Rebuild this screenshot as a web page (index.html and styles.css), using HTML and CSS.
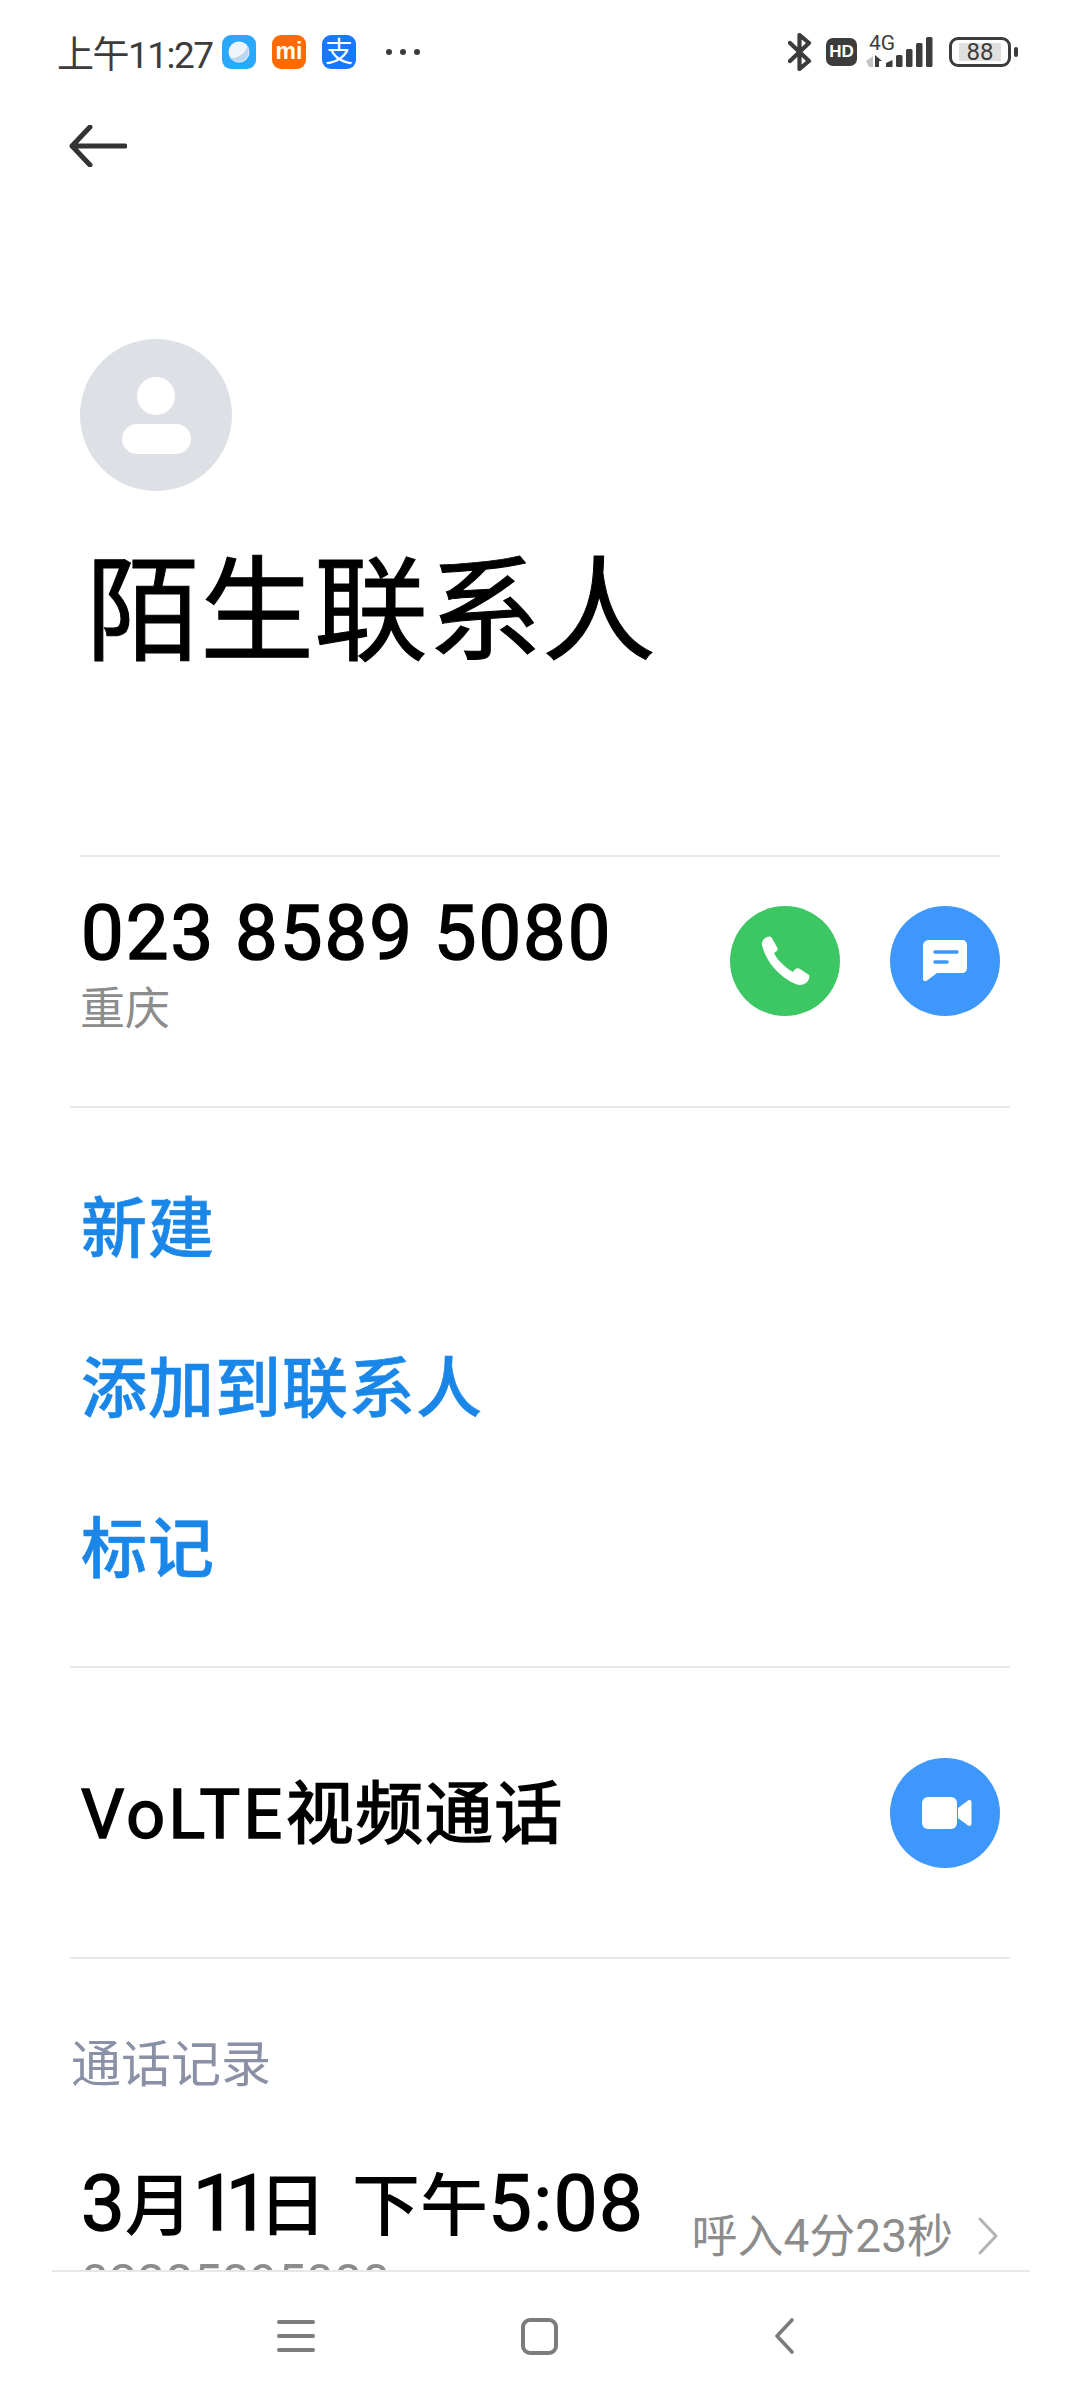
FILE: index.html
```html
<!DOCTYPE html>
<html lang="zh-CN">
<head>
    <meta charset="UTF-8">
    <meta name="viewport" content="width=device-width, initial-scale=1.0">
    <title>陌生联系人</title>
    <link rel="stylesheet" href="styles.css">
</head>
<body>
    <div class="phone">
        <div class="scroll-area">
            <div class="status-bar">
                <span class="time">上午11:27</span>
                <div class="notify-icons">
                    <svg class="app-icon" viewBox="0 0 34 34">
                        <rect width="34" height="34" rx="9" fill="#2aa8fb"/>
                        <circle cx="17" cy="17" r="10.500" fill="#eef4fa"/>
                        <path d="M8 23c6 1 14-3 18-12c2 6 0 12-5 15c-5 2-10 0-13-3z" fill="#bcd8f0"/>
                    </svg>
                    <svg class="app-icon" viewBox="0 0 34 34">
                        <rect width="34" height="34" rx="9" fill="#ff6a00"/>
                        <text x="17" y="24" class="mi-text">mi</text>
                    </svg>
                    <svg class="app-icon" viewBox="0 0 34 34">
                        <rect width="34" height="34" rx="9" fill="#1677ff"/>
                        <text x="17" y="27" class="pay-text">支</text>
                    </svg>
                    <div class="dots"><i></i><i></i><i></i></div>
                </div>
                <div class="system-icons">
                    <svg class="bt" viewBox="0 0 24 38">
                        <path d="M2 10l19 18l-9.500 8v-34l9.500 8l-19 18" fill="none" stroke="#3c3c3c" stroke-width="4.200" stroke-linejoin="round" stroke-linecap="round"/>
                    </svg>
                    <span class="hd">HD</span>
                    <svg class="signal" viewBox="0 0 68 34">
                        <text x="3" y="15" class="net-text">4G</text>
                        <path d="M7 21v11H3l-3-6z" fill="#c4c4c4"/>
                        <path d="M9 20l7 6h-3v6H9z" fill="#3c3c3c"/>
                        <path d="M20 28l6.500-3v7H20z" fill="#3c3c3c"/>
                        <rect x="30" y="20" width="6.500" height="12" rx="1.500" fill="#3c3c3c"/>
                        <rect x="40" y="14" width="6.500" height="18" rx="1.500" fill="#3c3c3c"/>
                        <rect x="50" y="8" width="6.500" height="24" rx="1.500" fill="#3c3c3c"/>
                        <rect x="60" y="2" width="6.500" height="30" rx="1.500" fill="#3c3c3c"/>
                    </svg>
                    <div class="battery">
                        <div class="battery-body"><span class="battery-level">88</span></div>
                        <div class="battery-tip"></div>
                    </div>
                </div>
            </div>

            <div class="toolbar">
                <svg class="back-arrow" viewBox="0 0 58 42">
                    <path d="M56 21H3M21 2L3 21l18 19" fill="none" stroke="#333" stroke-width="5" stroke-linecap="round" stroke-linejoin="round"/>
                </svg>
            </div>

            <div class="header">
                <div class="avatar">
                    <div class="avatar-head"></div>
                    <div class="avatar-body"></div>
                </div>
                <h1 class="name">陌生联系人</h1>
            </div>

            <div class="number-row">
                <div>
                    <div class="number">023 8589 5080</div>
                    <div class="location">重庆</div>
                </div>
                <div class="actions">
                    <div class="round-btn green">
                        <svg class="phone-icon" viewBox="0 0 50 50">
                            <path d="M2 9C1 5 5 1 9 .5C11 .5 12 2 13 4l4.500 8C18 14 17 15 14 17C16 22 24 31 33 36C35 33 37 31 40 33l9 6C50 41 49 44 46 47C43 49 40 49.500 37 48.500C22 43 6 27 2 9z" fill="#fff"/>
                        </svg>
                    </div>
                    <div class="round-btn blue">
                        <svg class="msg-icon" viewBox="0 0 45 43">
                            <path d="M6 1h33c3 0 5 2 5 5v23c0 3-2 5-5 5H14L4 41.500C2 43 0 42 0 40V7C0 3 3 1 6 1z" fill="#fff"/>
                            <path d="M12 13h22M12 23h12" stroke="#3e98fc" stroke-width="3.600" stroke-linecap="round"/>
                        </svg>
                    </div>
                </div>
            </div>

            <div class="link-list">
                <div class="link-item">新建</div>
                <div class="link-item">添加到联系人</div>
                <div class="link-item">标记</div>
            </div>

            <div class="volte-row">
                <div class="volte-text"><span class="latin">VoLTE</span>视频通话</div>
                <div class="round-btn blue">
                    <svg class="cam-icon" viewBox="0 0 50 32">
                        <rect x="0" y="0" width="35" height="32" rx="6" fill="#fff"/>
                        <path d="M36 11l10-7.500c2-1 3.500 0 3.500 2v21c0 2-1.500 3-3.500 2L36 21z" fill="#fff"/>
                    </svg>
                </div>
            </div>

            <div class="history">
                <div class="history-title">通话记录</div>
                <div class="call-row">
                    <div class="call-info">
                        <div class="call-time"><span class="num">3</span>月<span class="num tight">11</span>日<span class="num wide">&nbsp;</span>下午<span class="num loose">5:08</span></div>
                        <div class="call-number">02385895080</div>
                    </div>
                    <div class="call-meta">
                        <span>呼入4分23秒</span>
                        <svg class="chevron" viewBox="0 0 22 38">
                            <path d="M3 2l16 17L3 36" fill="none" stroke="#b4b4b4" stroke-width="3" stroke-linecap="round" stroke-linejoin="round"/>
                        </svg>
                    </div>
                </div>
            </div>
        </div>

        <div class="nav-bar">
            <div class="menu-icon"><i></i><i></i><i></i></div>
            <div class="home-icon"></div>
            <svg class="nav-back" viewBox="0 0 20 36">
                <path d="M18 2L3 18l15 16" fill="none" stroke="#7c7c7c" stroke-width="3.600" stroke-linecap="round" stroke-linejoin="round"/>
            </svg>
        </div>
    </div>
</body>
</html>
```

FILE: styles.css
```css
* {
    box-sizing: border-box;
}
body {
    margin: 0;
    background-color: #fff;
    font-family: Roboto, "Noto Sans CJK SC", sans-serif;
    color: #000;
}
.phone {
    width: 1080px;
    height: 2400px;
    display: flex;
    flex-direction: column;
    overflow: hidden;
}
.scroll-area {
    height: 2270px;
    overflow: hidden;
}

/* status bar */
.status-bar {
    height: 104px;
    padding: 0 62px 0 57px;
    display: flex;
    align-items: center;
    color: #3c3c3c;
}
.time {
    font-size: 37px;
    width: 165px;
    letter-spacing: -1.500px;
    white-space: nowrap;
}
.notify-icons {
    display: flex;
    align-items: center;
    gap: 16px;
}
.app-icon {
    width: 34px;
    height: 34px;
}
.mi-text {
    font-family: "Liberation Sans", sans-serif;
    font-size: 23px;
    font-weight: 700;
    fill: #fff;
    text-anchor: middle;
}
.pay-text {
    font-family: "Noto Sans CJK SC", sans-serif;
    font-size: 28px;
    fill: #fff;
    text-anchor: middle;
}
.dots {
    display: flex;
    gap: 8px;
    margin-left: 14px;
}
.dots i {
    width: 6px;
    height: 6px;
    border-radius: 50%;
    background-color: #3c3c3c;
}
.system-icons {
    margin-left: auto;
    display: flex;
    align-items: center;
}
.bt {
    width: 24px;
    height: 38px;
}
.hd {
    width: 31px;
    height: 28px;
    margin-left: 14px;
    border-radius: 7px;
    background-color: #3c3c3c;
    color: #fff;
    font-family: "Liberation Sans", sans-serif;
    font-size: 17px;
    font-weight: 700;
    line-height: 28px;
    text-align: center;
}
.signal {
    width: 68px;
    height: 34px;
    margin-left: 9px;
    overflow: visible;
}
.net-text {
    font-family: Roboto, sans-serif;
    font-size: 21px;
    fill: #3c3c3c;
}
.battery {
    display: flex;
    align-items: center;
    margin-left: 15px;
}
.battery-body {
    width: 62px;
    height: 30px;
    padding: 3px 7px;
    border: 3px solid #3c3c3c;
    border-radius: 9px;
}
.battery-level {
    display: block;
    width: 42px;
    height: 18px;
    background-color: #e0e0e0;
    font-size: 24px;
    line-height: 18px;
    text-align: center;
}
.battery-tip {
    width: 4px;
    height: 10px;
    margin-left: 3px;
    border-radius: 2px;
    background-color: #3c3c3c;
}

/* top */
.toolbar {
    height: 84px;
    padding-left: 69px;
    display: flex;
    align-items: center;
}
.back-arrow {
    width: 58px;
    height: 42px;
}
.header {
    padding: 151px 80px 0;
    height: 667px;
}
.avatar {
    width: 152px;
    height: 152px;
    border-radius: 50%;
    background-color: #dde0e5;
    display: flex;
    flex-direction: column;
    align-items: center;
    padding-top: 38px;
    gap: 9px;
}
.avatar-head {
    width: 38px;
    height: 38px;
    border-radius: 50%;
    background-color: #fff;
}
.avatar-body {
    width: 69px;
    height: 30px;
    border-radius: 15px;
    background-color: #fff;
}
.name {
    margin: 56px 0 0 6px;
    font-size: 114px;
    font-weight: 400;
    line-height: 130px;
    -webkit-text-stroke: 1px #000;
    white-space: nowrap;
}

/* number */
.number-row {
    margin: 0 80px;
    height: 251px;
    padding-bottom: 40px;
    border-top: 2px solid #e8e8e8;
    display: flex;
    justify-content: space-between;
    align-items: center;
}
.number {
    margin-top: 2px;
    margin-left: 1px;
    font-size: 76px;
    font-weight: 400;
    line-height: 90px;
    letter-spacing: 2px;
    word-spacing: -1px;
    -webkit-text-stroke: 1.600px #000;
    white-space: pre;
}
.location {
    margin-top: 4px;
    font-size: 45px;
    line-height: 56px;
    color: #8c8c8c;
}
.actions {
    display: flex;
    gap: 50px;
    margin-top: -2px;
}
.round-btn {
    width: 110px;
    height: 110px;
    border-radius: 50%;
    display: flex;
    align-items: center;
    justify-content: center;
}
.green {
    background-color: #3dc764;
}
.blue {
    background-color: #3e98fc;
}
.phone-icon {
    width: 50px;
    height: 50px;
}
.msg-icon {
    width: 45px;
    height: 43px;
}
.cam-icon {
    width: 50px;
    height: 32px;
    margin-left: 3px;
}

/* links */
.link-list {
    margin: 0 70px;
    padding: 42px 11px 0;
    height: 562px;
    border-top: 2px solid #e8e8e8;
    border-bottom: 2px solid #e8e8e8;
    display: flex;
    flex-direction: column;
}
.link-item {
    height: 160px;
    font-size: 66px;
    font-weight: 500;
    line-height: 160px;
    letter-spacing: 1px;
    color: #1a87e8;
    -webkit-text-stroke: 0.6px #1a87e8;
}

/* volte */
.volte-row {
    margin: 0 70px;
    padding: 0 10px 0 11px;
    height: 291px;
    border-bottom: 2px solid #e8e8e8;
    display: flex;
    justify-content: space-between;
    align-items: center;
}
.volte-text {
    margin-bottom: 8px;
    font-size: 68px;
    font-weight: 400;
    letter-spacing: 1.500px;
    -webkit-text-stroke: 1.600px #000;
}
.latin {
    letter-spacing: 3.500px;
}

/* history */
.history {
    padding: 0 81px 0 71px;
}
.history-title {
    margin-top: 76px;
    font-size: 50px;
    line-height: 60px;
    color: #8a90a5;
}
.call-row {
    margin-top: 64px;
    display: flex;
    justify-content: space-between;
    align-items: flex-start;
}
.call-info {
    margin-left: 10px;
}
.call-time {
    font-size: 68px;
    font-weight: 500;
    line-height: 90px;
    white-space: nowrap;
}
.num {
    font-size: 78px;
    font-weight: 400;
    -webkit-text-stroke: 1.400px #000;
}
.tight {
    letter-spacing: -11px;
}
.wide {
    letter-spacing: 6px;
}
.loose {
    letter-spacing: 1.500px;
}
.call-number {
    margin-top: 3px;
    font-size: 50px;
    line-height: 56px;
    color: #8c8c8c;
}
.call-meta {
    margin-top: 51px;
    display: flex;
    align-items: center;
    gap: 24px;
    font-size: 46px;
    line-height: 52px;
    color: #8c8c8c;
    white-space: nowrap;
}
.chevron {
    width: 22px;
    height: 38px;
}

/* nav */
.nav-bar {
    margin: 0 50px 0 52px;
    height: 130px;
    border-top: 2px solid #e8e8e8;
    padding-left: 225px;
    display: flex;
    align-items: center;
}
.menu-icon {
    width: 38px;
    height: 32px;
    display: flex;
    flex-direction: column;
    justify-content: space-between;
}
.menu-icon i {
    height: 4px;
    border-radius: 2px;
    background-color: #7c7c7c;
}
.home-icon {
    width: 37px;
    height: 37px;
    margin-left: 206px;
    border: 4px solid #7c7c7c;
    border-radius: 9px;
}
.nav-back {
    width: 20px;
    height: 36px;
    margin-left: 216px;
}
```
